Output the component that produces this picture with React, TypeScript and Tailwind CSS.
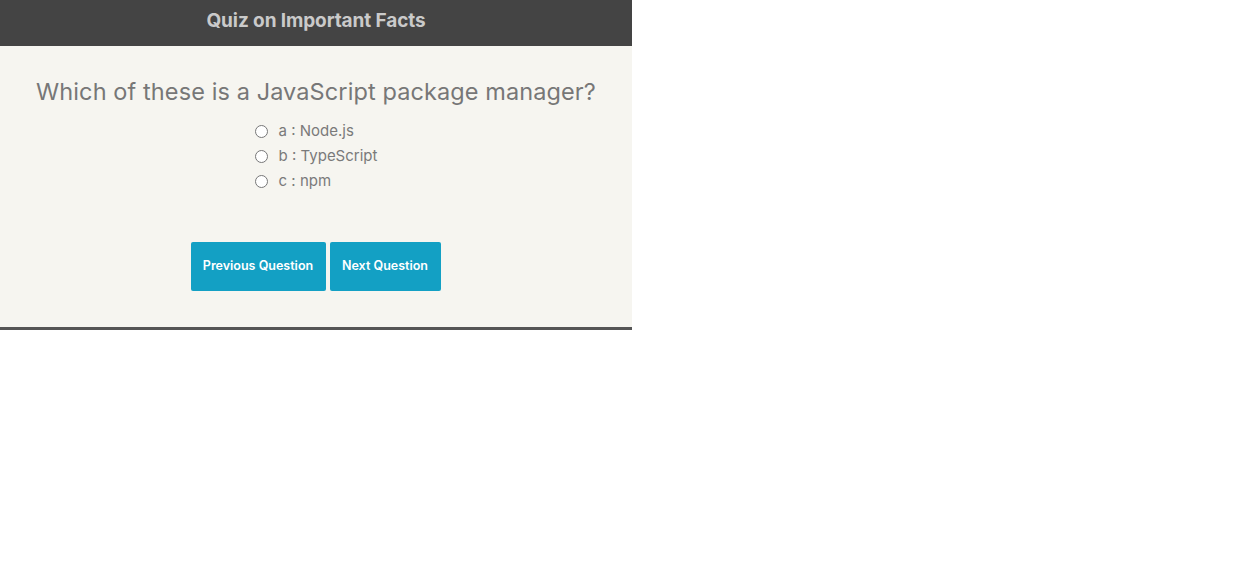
import React, { useState } from "react";

const options = [
  { key: "a", label: "Node.js" },
  { key: "b", label: "TypeScript" },
  { key: "c", label: "npm" },
];

export default function App() {
  const [picked, setPicked] = useState<string | null>(null);

  return (
    <div className="w-[632px] font-['Inter',sans-serif]">
      <div className="flex h-[46px] items-center justify-center bg-[#444444]">
        <h1 className="mt-[-3px] text-[19px] font-bold tracking-[-0.1px] text-[#cacaca]">Quiz on Important Facts</h1>
      </div>
      <div className="flex flex-col items-center border-b-[3px] border-[#555555] bg-[#f6f5f0] pt-[77px] pb-[36px]">
        <h2 className="mt-[-46px] text-[23.5px] leading-[30px] tracking-[0.1px] text-[#777777]">
          Which of these is a JavaScript package manager?
        </h2>
        <div className="mt-[14px] flex flex-col gap-[5px]">
          {options.map((o) => (
            <label key={o.key} className="flex h-[20px] cursor-pointer items-center gap-[11px] text-[15px] text-[#7a7a7a]">
              <input
                type="radio"
                name="q"
                checked={picked === o.key}
                onChange={() => setPicked(o.key)}
                className="h-[13px] w-[13px] accent-[#13a0c4]"
              />
              <span>
                {o.key} : {o.label}
              </span>
            </label>
          ))}
        </div>
        <div className="mt-[51px] ml-[-1px] flex gap-[4px]">
          <button className="h-[49px] w-[135px] rounded-[2px] bg-[#13a0c4] text-[12.5px] font-semibold text-white">
            Previous Question
          </button>
          <button className="h-[49px] w-[111px] rounded-[2px] bg-[#13a0c4] text-[12.5px] font-semibold text-white">
            Next Question
          </button>
        </div>
      </div>
    </div>
  );
}
